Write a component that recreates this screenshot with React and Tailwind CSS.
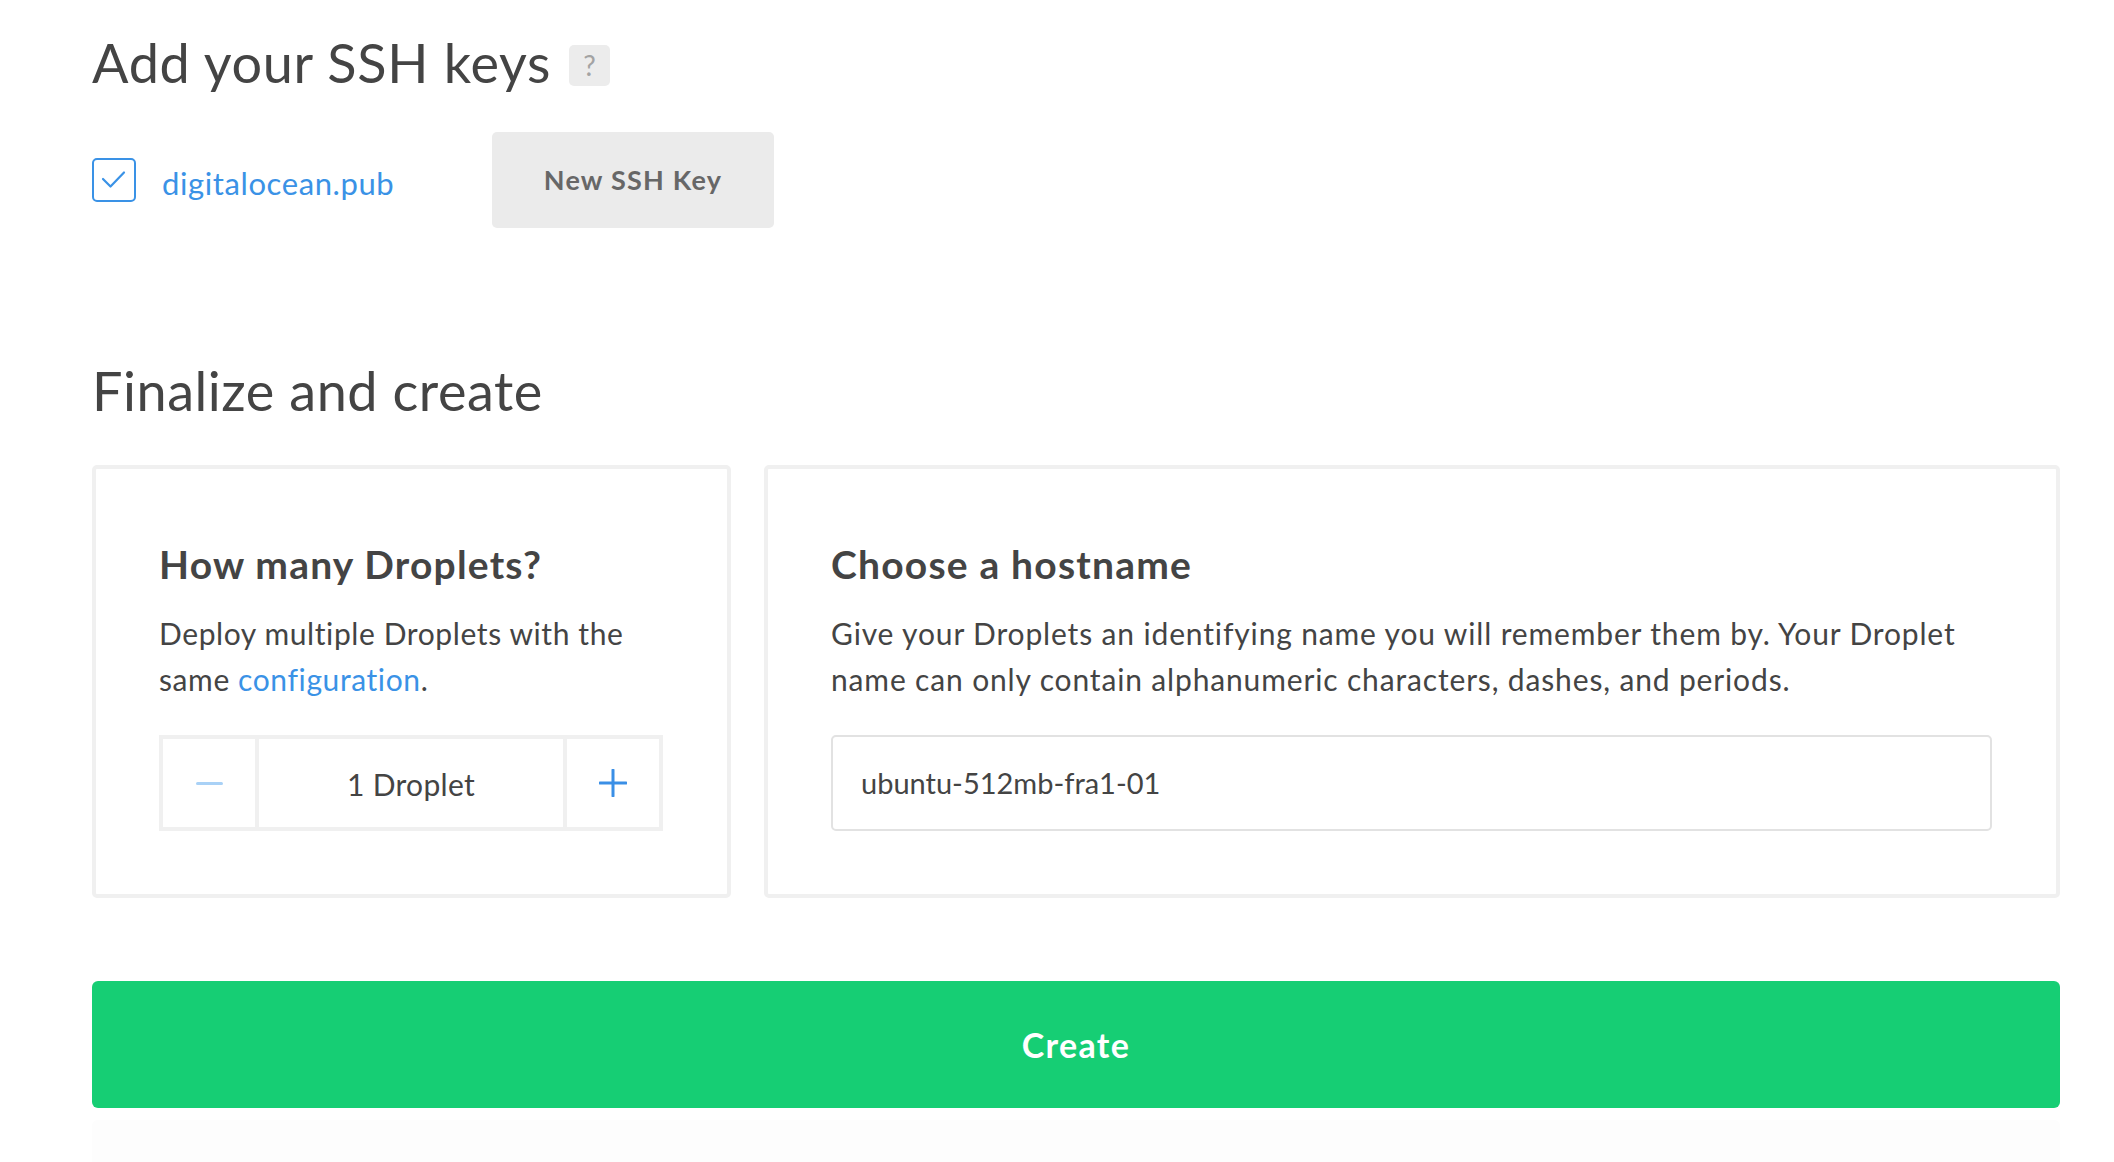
import React from "react";

function Check() {
  return (
    <div className="w-[44px] h-[44px] border-2 border-[#3a92e6] rounded-[5px] flex-none relative">
      <svg width="44" height="44" viewBox="0 0 44 44" className="absolute -left-[2px] -top-[2px]">
        <polyline points="11,21 18.5,28.5 32,14.5" fill="none" stroke="#3a92e6" strokeWidth="2.2" strokeLinecap="round" strokeLinejoin="round" />
      </svg>
    </div>
  );
}

export default function App() {
  return (
    <div className="min-h-[1162px] bg-white font-[Lato,'Noto_Sans',sans-serif] text-[#444444]">
      <div className="pl-[92px] pr-[54px] pt-[32px]">
        {/* SSH keys */}
        <div className="flex items-center">
          <h1 className="text-[54px] leading-[62px] tracking-[0.7px] font-normal text-[#444444]">Add your SSH keys</h1>
          <div className="ml-[18px] mt-[4px] w-[41px] h-[41px] rounded-[5px] bg-[#ececec] flex items-center justify-center text-[28px] font-normal text-[#a3a3a3]">?</div>
        </div>
        <div className="mt-[38px] flex items-center h-[96px]">
          <div className="w-[400px] flex items-center gap-[26px]">
            <Check />
            <a className="text-[31px] leading-[40px] tracking-[0.6px] text-[#3a92e6] mt-[5px]">digitalocean.pub</a>
          </div>
          <button className="w-[282px] h-[96px] rounded-[5px] bg-[#ebebeb] text-[27px] tracking-[1.2px] font-bold text-[#676767]">New SSH Key</button>
        </div>

        {/* Finalize */}
        <h2 className="mt-[132px] text-[54px] leading-[62px] tracking-[0.55px] font-normal text-[#444444]">Finalize and create</h2>
        <div className="mt-[43px] flex gap-[33px]">
          <div className="w-[639px] border-4 border-[#f0f0f0] rounded-[5px] pl-[63px] pr-[40px] pt-[72px] pb-[63px]">
            <h3 className="text-[39px] leading-[46px] tracking-[1.2px] font-bold text-[#444444]">How many Droplets?</h3>
            <p className="mt-[23px] text-[30px] leading-[46px] tracking-[0.6px] text-[#444444]">
              Deploy multiple Droplets with the<br />
              same <a className="text-[#3a92e6]">configuration</a>.
            </p>
            <div className="mt-[33px] w-[504px] h-[96px] border-4 border-[#f0f0f0] flex">
              <div className="w-[92px] flex items-center justify-center">
                <div className="w-[27px] h-[3px] bg-[#a9d1f6] rounded-full" />
              </div>
              <div className="flex-1 border-x-4 border-[#f0f0f0] flex items-center justify-center text-[30px] tracking-[0.3px] text-[#444444] pt-[3px]">1 Droplet</div>
              <div className="w-[92px] flex items-center justify-center">
                <svg width="28" height="28" viewBox="0 0 28 28">
                  <path d="M14 1v26M1 14h26" stroke="#3a8fe6" strokeWidth="3" strokeLinecap="round" />
                </svg>
              </div>
            </div>
          </div>
          <div className="flex-1 border-4 border-[#f0f0f0] rounded-[5px] pl-[63px] pr-[64px] pt-[72px] pb-[63px]">
            <h3 className="text-[39px] leading-[46px] tracking-[1.2px] font-bold text-[#444444]">Choose a hostname</h3>
            <p className="mt-[23px] text-[30px] leading-[46px] tracking-[0.85px] text-[#444444] whitespace-nowrap">
              Give your Droplets an identifying name you will remember them by. Your Droplet<br />
              name can only contain alphanumeric characters, dashes, and periods.
            </p>
            <div className="mt-[33px] h-[96px] border-2 border-[#e2e2e2] rounded-[5px] flex items-center px-[28px] text-[29px] text-[#444444]">
              ubuntu-512mb-fra1-01
            </div>
          </div>
        </div>

        <button className="mt-[83px] w-full h-[127px] rounded-[6px] bg-[#16ce74] text-white text-[34px] tracking-[1.3px] font-bold">Create</button>
        <div className="mt-[12px] h-[45px] bg-[#fdfdfd] rounded-t-[6px]" />
      </div>
    </div>
  );
}
